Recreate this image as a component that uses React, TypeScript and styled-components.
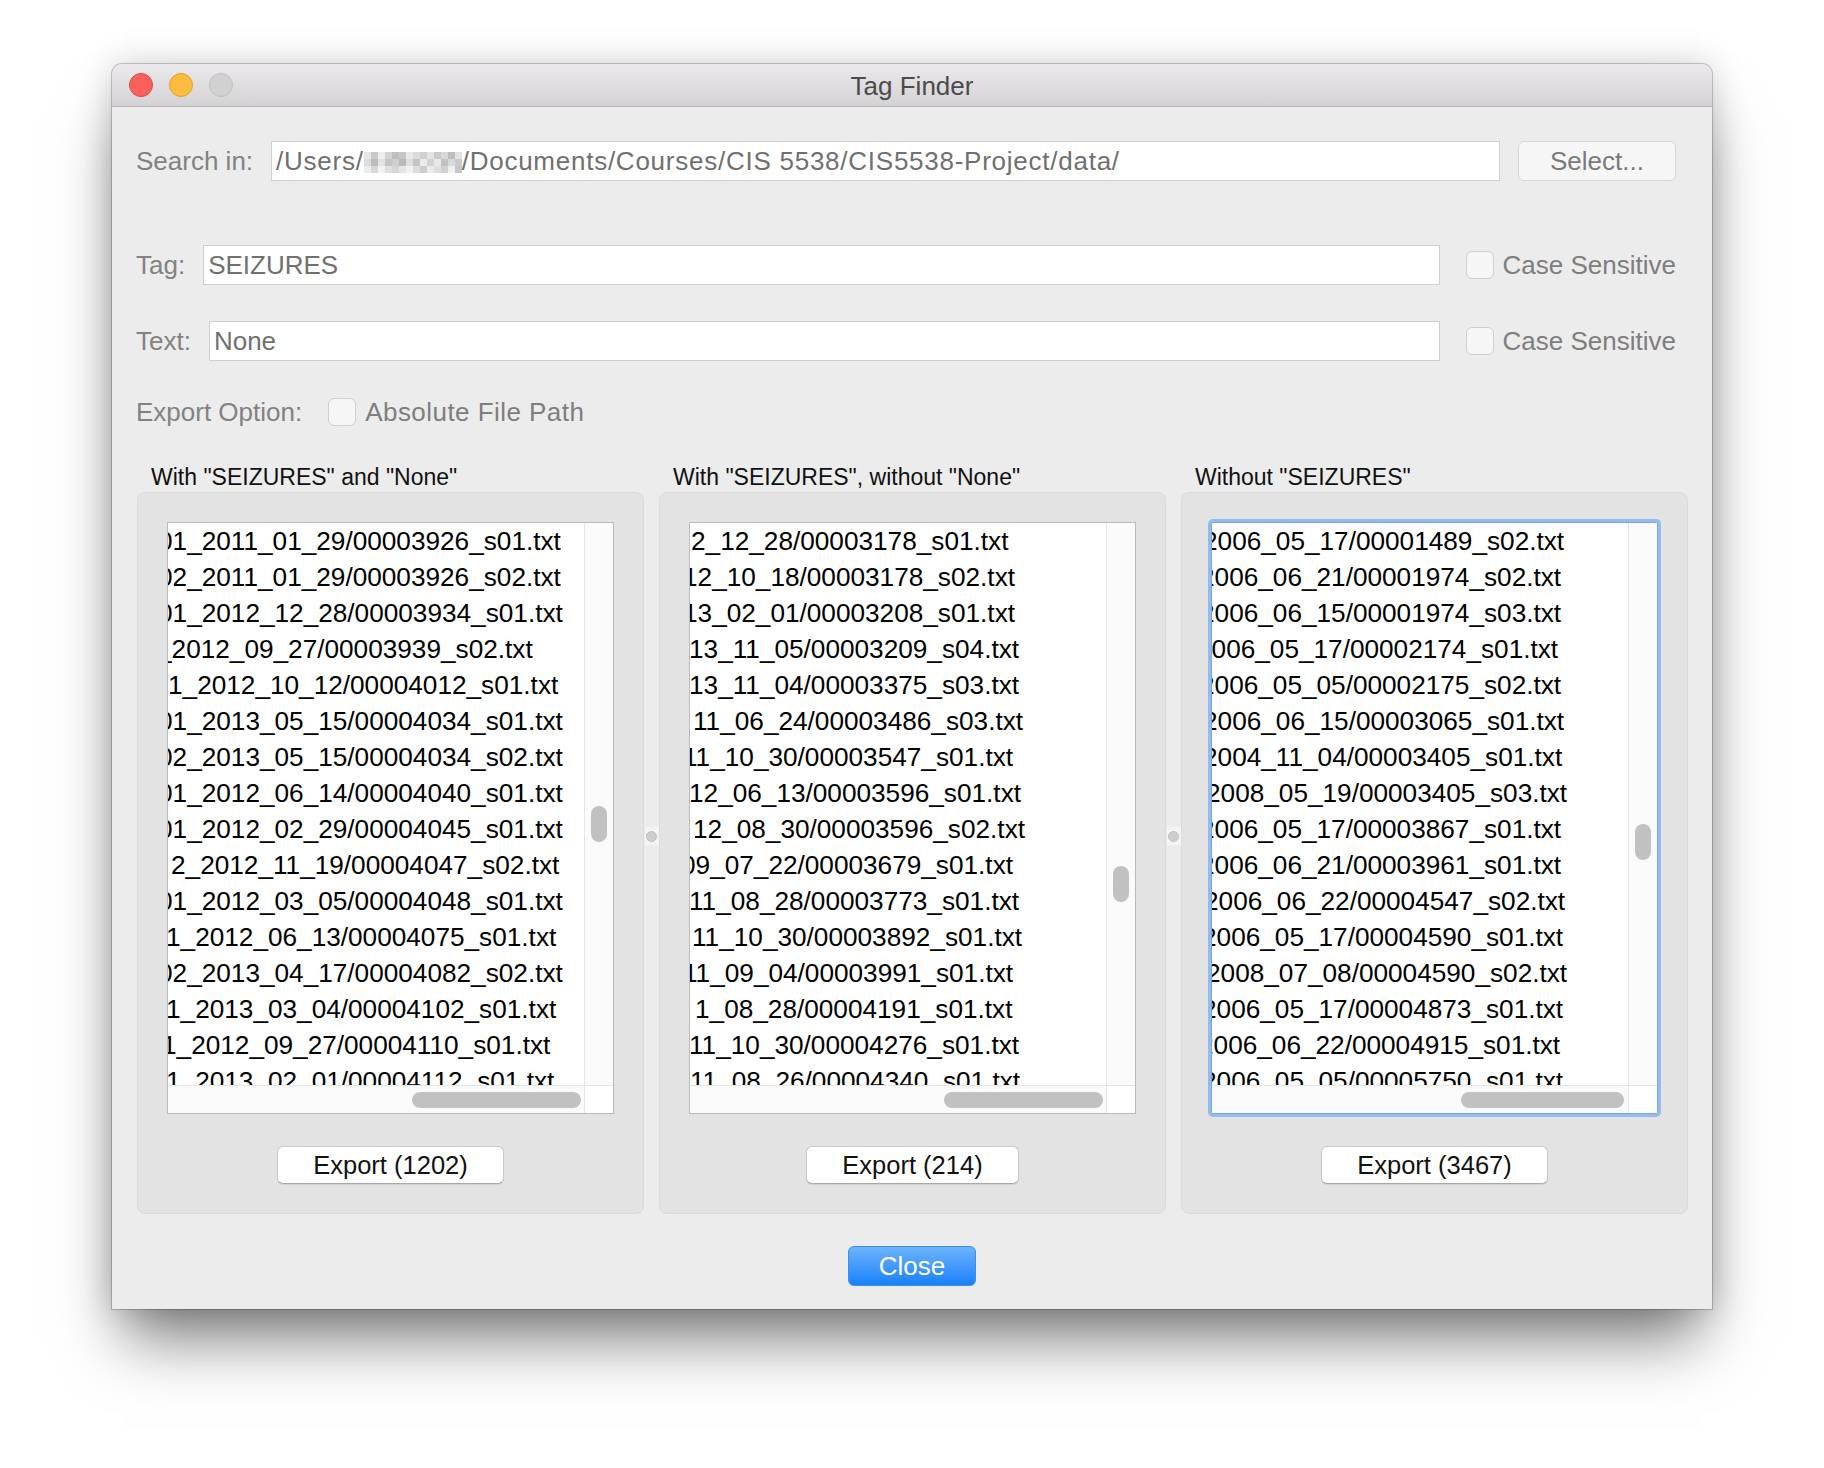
import React from 'react';
import styled, { createGlobalStyle } from 'styled-components';

const GlobalStyle = createGlobalStyle`
  html, body {
    margin: 0;
    padding: 0;
    background: #ffffff;
  }
  body {
    font-family: "Liberation Sans", Arial, sans-serif;
  }
  * {
    box-sizing: border-box;
  }
`;

const Page = styled.div`
  padding: 64px 112px 0;
  min-height: 1468px;
`;

const Window = styled.div`
  width: 1600px;
  background: #ececec;
  border-radius: 10px 10px 0 0;
  overflow: hidden;
  box-shadow: 0 42px 60px -12px rgba(0, 0, 0, 0.5), 0 0 34px rgba(0, 0, 0, 0.18),
    0 0 0 1px rgba(0, 0, 0, 0.2);
`;

const TitleBar = styled.div`
  height: 43px;
  display: grid;
  grid-template-columns: 1fr auto 1fr;
  align-items: center;
  padding: 0 17px;
  background: linear-gradient(#ebe9eb, #d4d2d4);
  border-bottom: 1px solid #b3b3b3;
`;

const Lights = styled.div`
  display: flex;
  gap: 16px;
`;

const Light = styled.span<{ $fill: string; $edge: string }>`
  width: 24px;
  height: 24px;
  border-radius: 50%;
  background: ${p => p.$fill};
  border: 1px solid ${p => p.$edge};
`;

const Title = styled.div`
  font-size: 26px;
  color: #4b4b4b;
  padding-top: 2px;
`;

const Body = styled.div`
  padding: 0 24px 23px;
`;

const FormRow = styled.div<{ $top: number }>`
  display: flex;
  align-items: center;
  height: 40px;
  margin-top: ${p => p.$top}px;
  padding-right: 12px;
  gap: 18px;
`;

const FieldLabel = styled.div`
  font-size: 26px;
  color: #828282;
  white-space: nowrap;
`;

const TextField = styled.div<{ $spaced?: boolean }>`
  flex: 1;
  height: 40px;
  display: flex;
  align-items: center;
  padding: 0 4px;
  background: #ffffff;
  border: 1px solid #cfcfcf;
  font-size: 26px;
  letter-spacing: ${p => (p.$spaced ? '0.75px' : '0')};
  color: #707070;
  white-space: nowrap;
  overflow: hidden;
`;

const Mosaic = styled.span`
  display: inline-grid;
  grid-template-columns: repeat(14, 7px);
  grid-auto-rows: 7px;
  margin-top: 2px;
`;

const Cell = styled.span<{ $shade: string }>`
  background: ${p => p.$shade};
`;

const SelectButton = styled.div`
  width: 158px;
  height: 40px;
  display: flex;
  align-items: center;
  justify-content: center;
  background: #f6f6f6;
  border: 1px solid #d7d7d7;
  border-radius: 6px;
  font-size: 26px;
  color: #7a7a7a;
`;

const CheckOption = styled.div<{ $offset: number; $spaced?: boolean }>`
  display: flex;
  align-items: center;
  gap: 9px;
  margin-left: ${p => p.$offset}px;
  font-size: 26px;
  letter-spacing: ${p => (p.$spaced ? '0.45px' : '0')};
  color: #7e7e7e;
  white-space: nowrap;
`;

const CheckBox = styled.span`
  width: 28px;
  height: 28px;
  border-radius: 6px;
  background: #f6f6f6;
  border: 1px solid #cfcfcf;
`;

const GroupsRow = styled.div`
  display: flex;
  margin-top: 31px;
  padding-left: 1px;
`;

const GroupColumn = styled.div`
  flex: 1;
  display: flex;
  flex-direction: column;
`;

const GroupTitle = styled.div`
  height: 28px;
  line-height: 28px;
  padding-left: 14px;
  margin-bottom: 1px;
  font-size: 23px;
  color: #111111;
  white-space: nowrap;
`;

const GroupBox = styled.div`
  display: flex;
  flex-direction: column;
  align-items: center;
  padding: 29px 29px 29px;
  background: #e3e3e3;
  border: 1px solid #dbdbdb;
  border-radius: 8px;
`;

const Divider = styled.div`
  width: 15px;
  flex: none;
  display: flex;
  justify-content: center;
  padding-top: 364px;
`;

const Knob = styled.div`
  width: 14px;
  height: 18px;
  display: flex;
  align-items: center;
  justify-content: center;
  background: #f4f4f4;
`;

const KnobDot = styled.span`
  width: 11px;
  height: 11px;
  border-radius: 50%;
  background: #cdcdcd;
  border: 1px solid #c0c0c0;
`;

const ListFrame = styled.div<{ $focused?: boolean }>`
  width: 100%;
  height: 592px;
  display: grid;
  grid-template-columns: 1fr 29px;
  grid-template-rows: 1fr 28px;
  background: #ffffff;
  border: 1px solid ${p => (p.$focused ? '#7ea6dc' : '#bababa')};
  border-radius: ${p => (p.$focused ? '2px' : '0')};
  box-shadow: ${p => (p.$focused ? '0 0 0 3px #92bcef' : 'none')};
`;

const Viewport = styled.div`
  overflow: hidden;
`;

const FileRow = styled.div<{ $shift: number }>`
  height: 36px;
  line-height: 36px;
  margin-left: ${p => p.$shift}px;
  font-size: 26.2px;
  color: #000000;
  white-space: nowrap;
`;

const VTrack = styled.div`
  position: relative;
  background: #fafafa;
  border-left: 1px solid #e7e7e7;
`;

const VThumb = styled.span<{ $top: number }>`
  position: absolute;
  left: 6px;
  top: ${p => p.$top}px;
  width: 16px;
  height: 36px;
  border-radius: 8px;
  background: #c1c1c1;
`;

const HTrack = styled.div`
  position: relative;
  background: #fafafa;
  border-top: 1px solid #e7e7e7;
`;

const HThumb = styled.span<{ $left: number; $width: number }>`
  position: absolute;
  top: 6px;
  left: ${p => p.$left}px;
  width: ${p => p.$width}px;
  height: 16px;
  border-radius: 8px;
  background: #c1c1c1;
`;

const Corner = styled.div`
  background: #ffffff;
  border-left: 1px solid #e7e7e7;
  border-top: 1px solid #e7e7e7;
`;

const ExportButton = styled.div`
  margin-top: 32px;
  height: 38px;
  padding: 0 35px;
  display: flex;
  align-items: center;
  background: #ffffff;
  border: 1px solid #c8c8c8;
  border-bottom-color: #a9a9a9;
  border-radius: 6px;
  box-shadow: 0 1px 1px rgba(0, 0, 0, 0.08);
  font-size: 25.5px;
  color: #111111;
  white-space: nowrap;
`;

const CloseRow = styled.div`
  display: flex;
  justify-content: center;
  margin-top: 32px;
`;

const CloseButton = styled.div`
  width: 128px;
  height: 40px;
  display: flex;
  align-items: center;
  justify-content: center;
  border-radius: 6px;
  background: linear-gradient(#6db4fb, #1a81fb);
  border: 1px solid #3a8ef3;
  font-size: 26px;
  color: #ffffff;
`;

type FileEntry = [string, number];

type ResultList = {
  title: string;
  count: number;
  focused?: boolean;
  thumbTop: number;
  barLeft: number;
  barWidth: number;
  files: FileEntry[];
};

const mosaic = [
  '#e6e6e6', '#c9c9c9', '#eeeeee', '#d4d4d4', '#bfbfbf', '#c7c7c7', '#e9e9e9',
  '#dbdbdb', '#d0d0d0', '#e4e4e4', '#cacaca', '#d8d8d8', '#bdbdbd', '#e2e2e2',
  '#dcdcdc', '#bcbcbc', '#e3e3e3', '#c5c5c5', '#cfcfcf', '#b9b9b9', '#dedede',
  '#c4c4c4', '#ebebeb', '#d3d3d3', '#e8e8e8', '#c2c2c2', '#d9d9d9', '#cbcbcb',
  '#ececec', '#d7d7d7', '#f2f2f2', '#e0e0e0', '#d5d5d5', '#e5e5e5', '#f0f0f0',
  '#dddddd', '#cdcdcd', '#eaeaea', '#dfdfdf', '#d1d1d1', '#efefef', '#c6c6c6',
];

const lists: ResultList[] = [
  {
    title: 'With "SEIZURES" and "None"',
    count: 1202,
    thumbTop: 283,
    barLeft: 244,
    barWidth: 169,
    files: [
      ['01_2011_01_29/00003926_s01.txt', -10],
      ['02_2011_01_29/00003926_s02.txt', -10],
      ['01_2012_12_28/00003934_s01.txt', -10],
      ['_2012_09_27/00003939_s02.txt', -11],
      ['1_2012_10_12/00004012_s01.txt', 0],
      ['01_2013_05_15/00004034_s01.txt', -10],
      ['02_2013_05_15/00004034_s02.txt', -10],
      ['01_2012_06_14/00004040_s01.txt', -10],
      ['01_2012_02_29/00004045_s01.txt', -10],
      ['2_2012_11_19/00004047_s02.txt', 3],
      ['01_2012_03_05/00004048_s01.txt', -10],
      ['1_2012_06_13/00004075_s01.txt', -2],
      ['02_2013_04_17/00004082_s02.txt', -10],
      ['1_2013_03_04/00004102_s01.txt', -2],
      ['1_2012_09_27/00004110_s01.txt', -6],
      ['1_2013_02_01/00004112_s01.txt', -2],
    ],
  },
  {
    title: 'With "SEIZURES", without "None"',
    count: 214,
    thumbTop: 343,
    barLeft: 254,
    barWidth: 159,
    files: [
      ['2_12_28/00003178_s01.txt', 1],
      ['12_10_18/00003178_s02.txt', -7],
      ['13_02_01/00003208_s01.txt', -7],
      ['13_11_05/00003209_s04.txt', -1],
      ['13_11_04/00003375_s03.txt', -1],
      ['11_06_24/00003486_s03.txt', 3],
      ['11_10_30/00003547_s01.txt', -7],
      ['12_06_13/00003596_s01.txt', -1],
      ['12_08_30/00003596_s02.txt', 3],
      ['09_07_22/00003679_s01.txt', -9],
      ['11_08_28/00003773_s01.txt', -1],
      ['11_10_30/00003892_s01.txt', 2],
      ['11_09_04/00003991_s01.txt', -7],
      ['1_08_28/00004191_s01.txt', 5],
      ['11_10_30/00004276_s01.txt', -1],
      ['11_08_26/00004340_s01.txt', 0],
    ],
  },
  {
    title: 'Without "SEIZURES"',
    count: 3467,
    focused: true,
    thumbTop: 301,
    barLeft: 249,
    barWidth: 163,
    files: [
      ['2006_05_17/00001489_s02.txt', -9],
      ['2006_06_21/00001974_s02.txt', -12],
      ['2006_06_15/00001974_s03.txt', -12],
      ['2006_05_17/00002174_s01.txt', -15],
      ['2006_05_05/00002175_s02.txt', -12],
      ['2006_06_15/00003065_s01.txt', -9],
      ['2004_11_04/00003405_s01.txt', -9],
      ['2008_05_19/00003405_s03.txt', -6],
      ['2006_05_17/00003867_s01.txt', -12],
      ['2006_06_21/00003961_s01.txt', -12],
      ['2006_06_22/00004547_s02.txt', -8],
      ['2006_05_17/00004590_s01.txt', -10],
      ['2008_07_08/00004590_s02.txt', -6],
      ['2006_05_17/00004873_s01.txt', -10],
      ['2006_06_22/00004915_s01.txt', -13],
      ['2006_05_05/00005750_s01.txt', -10],
    ],
  },
];

const FileList = ({ list }: { list: ResultList }) => (
  <ListFrame $focused={list.focused}>
    <Viewport>
      {list.files.map(([name, shift], i) => (
        <FileRow key={i} $shift={shift}>
          {name}
        </FileRow>
      ))}
    </Viewport>
    <VTrack>
      <VThumb $top={list.thumbTop} />
    </VTrack>
    <HTrack>
      <HThumb $left={list.barLeft} $width={list.barWidth} />
    </HTrack>
    <Corner />
  </ListFrame>
);

const App = () => {
  return (
    <>
      <GlobalStyle />
      <Page>
        <Window>
          <TitleBar>
            <Lights>
              <Light $fill="#fc605c" $edge="#df4a43" />
              <Light $fill="#fdbc40" $edge="#dea226" />
              <Light $fill="#d1d1d1" $edge="#bfbfbf" />
            </Lights>
            <Title>Tag Finder</Title>
            <div />
          </TitleBar>

          <Body>
            <FormRow $top={34}>
              <FieldLabel>Search in:</FieldLabel>
              <TextField $spaced>
                /Users/
                <Mosaic>
                  {mosaic.map((shade, i) => (
                    <Cell key={i} $shade={shade} />
                  ))}
                </Mosaic>
                /Documents/Courses/CIS 5538/CIS5538-Project/data/
              </TextField>
              <SelectButton>Select...</SelectButton>
            </FormRow>

            <FormRow $top={64}>
              <FieldLabel>Tag:</FieldLabel>
              <TextField>SEIZURES</TextField>
              <CheckOption $offset={8}>
                <CheckBox />
                Case Sensitive
              </CheckOption>
            </FormRow>

            <FormRow $top={36}>
              <FieldLabel>Text:</FieldLabel>
              <TextField>None</TextField>
              <CheckOption $offset={8}>
                <CheckBox />
                Case Sensitive
              </CheckOption>
            </FormRow>

            <FormRow $top={31}>
              <FieldLabel>Export Option:</FieldLabel>
              <CheckOption $offset={8} $spaced>
                <CheckBox />
                Absolute File Path
              </CheckOption>
            </FormRow>

            <GroupsRow>
              {lists.map((list, i) => (
                <React.Fragment key={list.title}>
                  {i > 0 && (
                    <Divider>
                      <Knob>
                        <KnobDot />
                      </Knob>
                    </Divider>
                  )}
                  <GroupColumn>
                    <GroupTitle>{list.title}</GroupTitle>
                    <GroupBox>
                      <FileList list={list} />
                      <ExportButton>Export ({list.count})</ExportButton>
                    </GroupBox>
                  </GroupColumn>
                </React.Fragment>
              ))}
            </GroupsRow>

            <CloseRow>
              <CloseButton>Close</CloseButton>
            </CloseRow>
          </Body>
        </Window>
      </Page>
    </>
  );
};

export default App;
